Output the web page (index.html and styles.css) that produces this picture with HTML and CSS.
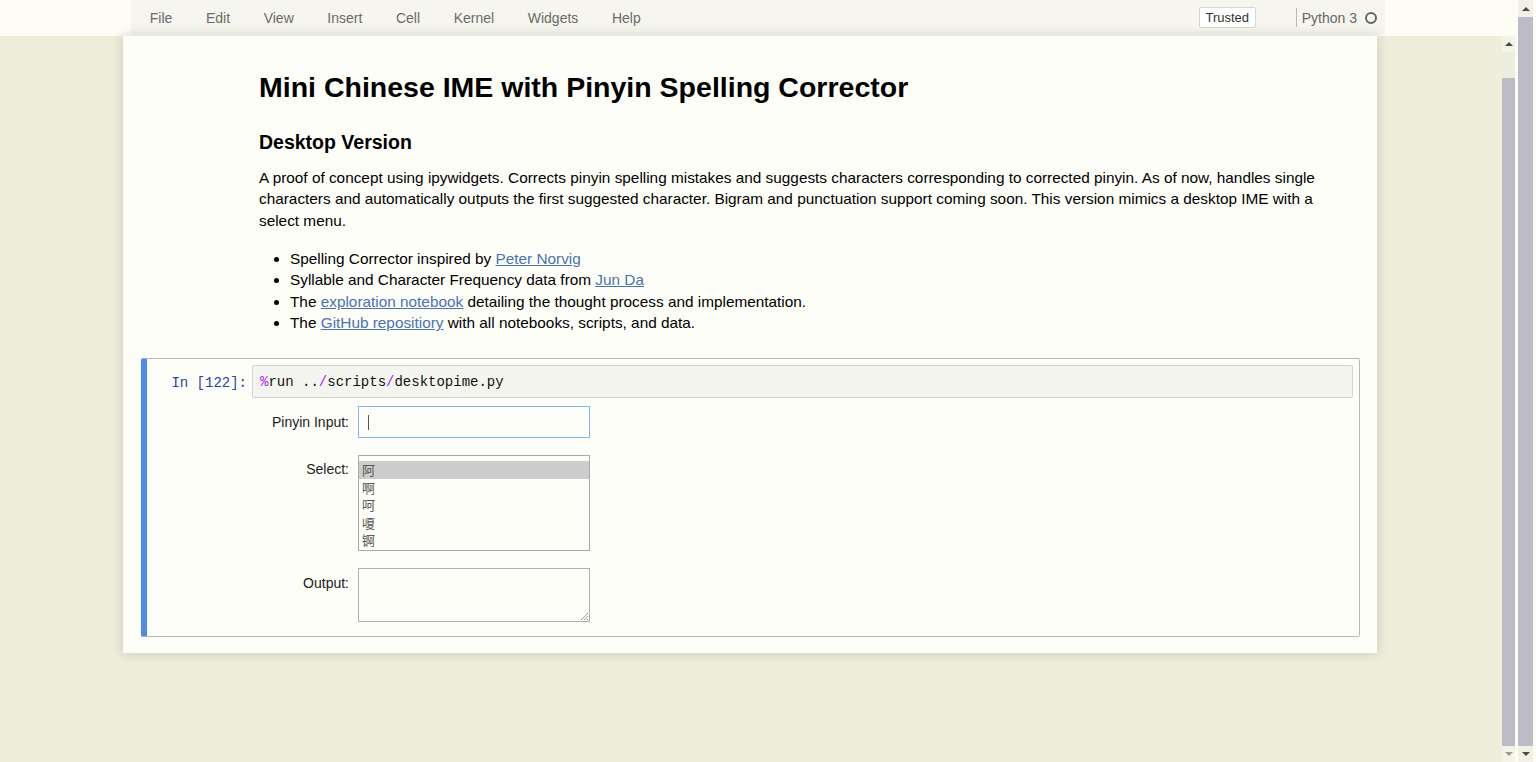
FILE: index.html
```html
<!DOCTYPE html>
<html lang="en">
<head>
<meta charset="utf-8">
<title>Mini Chinese IME</title>
<link rel="stylesheet" href="styles.css">
</head>
<body>
<div class="window">
  <div class="app">
    <header class="header">
      <div class="menubar">
        <nav class="menu">
          <span class="menu-item">File</span>
          <span class="menu-item">Edit</span>
          <span class="menu-item">View</span>
          <span class="menu-item">Insert</span>
          <span class="menu-item">Cell</span>
          <span class="menu-item">Kernel</span>
          <span class="menu-item">Widgets</span>
          <span class="menu-item">Help</span>
        </nav>
        <div class="kernel-area">
          <span class="trusted">Trusted</span>
          <span class="kernel-sep"></span>
          <span class="kernel-name">Python 3</span>
          <span class="kernel-idle"></span>
        </div>
      </div>
    </header>
    <div class="site">
      <main class="site-scroll">
        <div class="notebook">
          <div class="md-cell">
            <h1 class="h1">Mini Chinese IME with Pinyin Spelling Corrector</h1>
            <h3 class="h3">Desktop Version</h3>
            <p class="para">A proof of concept using ipywidgets. Corrects pinyin spelling mistakes and suggests characters corresponding to corrected pinyin. As of now, handles single characters and automatically outputs the first suggested character. Bigram and punctuation support coming soon. This version mimics a desktop IME with a select menu.</p>
            <ul class="list">
              <li>Spelling Corrector inspired by <a class="link" href="#">Peter Norvig</a></li>
              <li>Syllable and Character Frequency data from <a class="link" href="#">Jun Da</a></li>
              <li>The <a class="link" href="#">exploration notebook</a> detailing the thought process and implementation.</li>
              <li>The <a class="link" href="#">GitHub repositiory</a> with all notebooks, scripts, and data.</li>
            </ul>
          </div>
          <div class="code-cell">
            <div class="input-row">
              <div class="prompt">In&nbsp;[122]:</div>
              <div class="input-area"><span class="cm-magic">%</span>run ..<span class="cm-op">/</span>scripts<span class="cm-op">/</span>desktopime.py</div>
            </div>
            <div class="output-area">
              <div class="widget-row">
                <label class="widget-label">Pinyin Input:</label>
                <div class="text-input"><span class="caret"></span></div>
              </div>
              <div class="widget-row">
                <label class="widget-label">Select:</label>
                <div class="select-box">
                  <div class="option selected">阿</div>
                  <div class="option">啊</div>
                  <div class="option">呵</div>
                  <div class="option">嗄</div>
                  <div class="option">锕</div>
                </div>
              </div>
              <div class="widget-row">
                <label class="widget-label">Output:</label>
                <div class="textarea">
                  <svg class="grip" width="9" height="9" viewBox="0 0 9 9"><path d="M8 1 L1 8 M8 4 L4 8 M8 7 L7 8" stroke="#9a9a9a" stroke-width="1" fill="none"/></svg>
                </div>
              </div>
            </div>
          </div>
        </div>
      </main>
      <div class="vscroll inner">
        <div class="arrow up"></div>
        <div class="track-top"></div>
        <div class="thumb"></div>
        <div class="arrow down light"></div>
      </div>
    </div>
  </div>
  <div class="outer-col">
    <div class="vscroll outer">
      <div class="arrow up"></div>
      <div class="thumb"></div>
      <div class="arrow down"></div>
    </div>
  </div>
</div>
</body>
</html>
```
FILE: styles.css
```css
html, body {
  margin: 0;
  padding: 0;
  height: 762px;
  overflow: hidden;
}
body {
  font-family: "Liberation Sans", Arial, sans-serif;
  color: #000;
  background: #fdfdf6;
}
.window {
  display: flex;
  width: 1536px;
  height: 762px;
}
.app {
  width: 1517px;
  display: flex;
  flex-direction: column;
}
.header {
  height: 36px;
  background: #fdfdf5;
  flex: none;
}
.menubar {
  margin-left: 131px;
  width: 1254px;
  height: 35px;
  background: #f6f6ef;
  display: flex;
  align-items: center;
  justify-content: space-between;
}
.menu {
  display: flex;
  padding-left: 2px;
}
.menu-item {
  font-size: 14px;
  color: #6a6a6a;
  padding: 0 16.8px;
  line-height: 20px;
}
.kernel-area {
  display: flex;
  align-items: center;
  padding-right: 8px;
}
.trusted {
  font-size: 13px;
  color: #333;
  background: #fff;
  border: 1px solid #d6d6d6;
  border-radius: 2px;
  height: 19px;
  line-height: 19px;
  width: 55px;
  text-align: center;
  margin-right: 40px;
}
.kernel-sep {
  width: 1px;
  height: 19px;
  background: #b8b8b8;
  margin-right: 5px;
}
.kernel-name {
  font-size: 14px;
  color: #666;
  margin-right: 8px;
}
.kernel-idle {
  width: 8px;
  height: 8px;
  border: 2px solid #666;
  border-radius: 50%;
}
.site {
  flex: 1;
  display: flex;
  background: #eeeedb;
  min-height: 0;
}
.site-scroll {
  width: 1502px;
  flex: none;
}
.notebook {
  margin-left: 123px;
  width: 1254px;
  height: 617px;
  box-sizing: border-box;
  background: #fefef8;
  box-shadow: 0 0 10px 1px rgba(90, 90, 90, 0.22);
  padding: 0 17px 0 18px;
}
.md-cell {
  padding: 34px 0 0 118px;
  height: 288px;
  box-sizing: border-box;
}
.h1 {
  margin: 0;
  font-size: 28.5px;
  line-height: 34px;
  font-weight: bold;
}
.h3 {
  margin: 27px 0 0;
  font-size: 19.5px;
  line-height: 23px;
  font-weight: bold;
}
.para {
  margin: 13px 0 0;
  font-size: 15.35px;
  line-height: 21.45px;
  padding-right: 30px;
}
.list {
  margin: 16.5px 0 0;
  padding-left: 31px;
  font-size: 15.35px;
  line-height: 21.45px;
}
.link {
  color: #4a72b2;
  text-decoration: underline;
}
.code-cell {
  border: 1px solid #b8b8b8;
  border-left: 6px solid #4f89ef;
  border-radius: 2px;
  height: 279px;
  box-sizing: border-box;
  margin-top: 34px;
  padding: 6px 6px 0 0;
}
.input-row {
  display: flex;
  align-items: center;
}
.prompt {
  width: 100px;
  flex: none;
  text-align: right;
  padding-right: 5px;
  padding-top: 3px;
  font-family: "Liberation Mono", "Courier New", monospace;
  font-size: 14px;
  color: #303f9f;
}
.input-area {
  flex: 1;
  height: 31px;
  line-height: 33px;
  background: #f5f5f0;
  border: 1px solid #d4d4d0;
  border-radius: 2px;
  padding-left: 7px;
  font-family: "Liberation Mono", "Courier New", monospace;
  font-size: 14px;
  color: #111;
}
.cm-magic, .cm-op {
  color: #aa22ff;
}
.output-area {
  padding-top: 8px;
  display: flex;
  flex-direction: column;
  gap: 17px;
}
.widget-row {
  display: flex;
  align-items: flex-start;
}
.widget-label {
  width: 202px;
  flex: none;
  text-align: right;
  padding-right: 9px;
  font-size: 14px;
  color: #222;
  line-height: 18px;
}
.widget-row:first-child .widget-label {
  line-height: 32px;
}
.widget-row:nth-child(2) .widget-label {
  margin-top: 5px;
}
.widget-row:nth-child(3) .widget-label {
  margin-top: 6px;
}
.text-input {
  width: 232px;
  height: 32px;
  box-sizing: border-box;
  border: 1px solid #7fb8ee;
  background: #fefef8;
  display: flex;
  align-items: center;
  padding-left: 9px;
}
.caret {
  width: 1px;
  height: 15px;
  background: #555;
}
.select-box {
  width: 232px;
  height: 96px;
  box-sizing: border-box;
  border: 1px solid #a8a8b4;
  background: #fefef8;
  padding-top: 5px;
}
.option {
  height: 17.6px;
  line-height: 17.6px;
  padding-left: 3px;
  font-family: "Noto Sans CJK SC", sans-serif;
  font-size: 13px;
  color: #555;
}
.option.selected {
  background: #cdcdcd;
}
.textarea {
  width: 232px;
  height: 54px;
  box-sizing: border-box;
  border: 1px solid #b0b0b8;
  background: #fefef8;
  display: flex;
  justify-content: flex-end;
  align-items: flex-end;
}
.grip {
  display: block;
}
.vscroll {
  display: flex;
  flex-direction: column;
}
.vscroll.inner {
  width: 15px;
  flex: none;
  background: #fcfcf2;
}
.arrow {
  height: 16px;
  flex: none;
  display: flex;
  align-items: center;
  justify-content: center;
}
.arrow::before {
  content: "";
  width: 0;
  height: 0;
  border-left: 4px solid transparent;
  border-right: 4px solid transparent;
}
.arrow.up::before {
  border-bottom: 4px solid #4a4a4a;
}
.arrow.down::before {
  border-top: 4px solid #4a4a4a;
}
.arrow.down.light::before {
  border-top-color: #9a9a9a;
}
.inner .arrow, .inner .track-top, .inner .thumb {
  width: 13px;
}
.inner .arrow {
  background: #f3f3e8;
}
.track-top {
  height: 26px;
  background: #ecece0;
}
.thumb {
  flex: 1;
  background: #bcbcc6;
}
.outer-col {
  width: 19px;
  flex: none;
  padding-left: 1px;
  box-sizing: border-box;
  background: #fdfdf6;
}
.vscroll.outer {
  width: 15px;
  height: 762px;
  background: #f1f1e6;
}
.outer .arrow.up {
  height: 17px;
}
```
